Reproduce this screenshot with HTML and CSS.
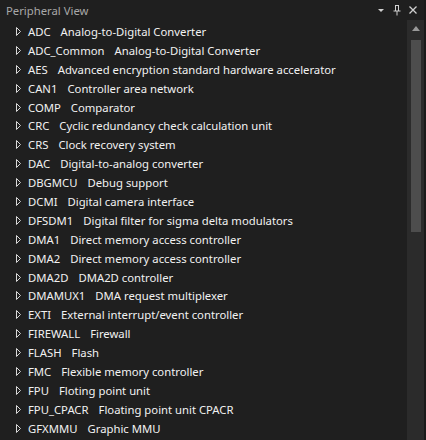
FILE: index.html
```html
<!DOCTYPE html>
<html>
<head>
<meta charset="utf-8">
<link rel="stylesheet" href="styles.css">
</head>
<body>
<div class="panel">
  <div class="titlebar">
    <span class="title">Peripheral View</span>
    <div class="tools">
      <svg class="tool" width="10" height="10" viewBox="0 0 10 10"><path d="M2 4 L8 4 L5 7 Z" fill="#d0d0d0"/></svg>
      <svg class="tool" width="10" height="12" viewBox="0 0 10 12"><path d="M3 1.5 H7 M3.5 1.5 V7 M6.5 1.5 V7 M1.5 7 H8.5 M5 7 V11.5" stroke="#d0d0d0" stroke-width="1" fill="none"/></svg>
      <svg class="tool" width="10" height="10" viewBox="0 0 10 10"><path d="M1.5 1.5 L8.5 8.5 M8.5 1.5 L1.5 8.5" stroke="#d0d0d0" stroke-width="1.3" fill="none"/></svg>
    </div>
  </div>
  <div class="body">
    <ul class="tree">
      <li><svg class="tri" width="6" height="9" viewBox="0 0 6 9"><path d="M0.5 0.5 L4.5 4.5 L0.5 8.5 Z" fill="none" stroke="#d8d8d8" stroke-width="1"/></svg><b>ADC</b><span>Analog-to-Digital Converter</span></li>
      <li><svg class="tri" width="6" height="9" viewBox="0 0 6 9"><path d="M0.5 0.5 L4.5 4.5 L0.5 8.5 Z" fill="none" stroke="#d8d8d8" stroke-width="1"/></svg><b>ADC_Common</b><span>Analog-to-Digital Converter</span></li>
      <li><svg class="tri" width="6" height="9" viewBox="0 0 6 9"><path d="M0.5 0.5 L4.5 4.5 L0.5 8.5 Z" fill="none" stroke="#d8d8d8" stroke-width="1"/></svg><b>AES</b><span>Advanced encryption standard hardware accelerator</span></li>
      <li><svg class="tri" width="6" height="9" viewBox="0 0 6 9"><path d="M0.5 0.5 L4.5 4.5 L0.5 8.5 Z" fill="none" stroke="#d8d8d8" stroke-width="1"/></svg><b>CAN1</b><span>Controller area network</span></li>
      <li><svg class="tri" width="6" height="9" viewBox="0 0 6 9"><path d="M0.5 0.5 L4.5 4.5 L0.5 8.5 Z" fill="none" stroke="#d8d8d8" stroke-width="1"/></svg><b>COMP</b><span>Comparator</span></li>
      <li><svg class="tri" width="6" height="9" viewBox="0 0 6 9"><path d="M0.5 0.5 L4.5 4.5 L0.5 8.5 Z" fill="none" stroke="#d8d8d8" stroke-width="1"/></svg><b>CRC</b><span>Cyclic redundancy check calculation unit</span></li>
      <li><svg class="tri" width="6" height="9" viewBox="0 0 6 9"><path d="M0.5 0.5 L4.5 4.5 L0.5 8.5 Z" fill="none" stroke="#d8d8d8" stroke-width="1"/></svg><b>CRS</b><span>Clock recovery system</span></li>
      <li><svg class="tri" width="6" height="9" viewBox="0 0 6 9"><path d="M0.5 0.5 L4.5 4.5 L0.5 8.5 Z" fill="none" stroke="#d8d8d8" stroke-width="1"/></svg><b>DAC</b><span>Digital-to-analog converter</span></li>
      <li><svg class="tri" width="6" height="9" viewBox="0 0 6 9"><path d="M0.5 0.5 L4.5 4.5 L0.5 8.5 Z" fill="none" stroke="#d8d8d8" stroke-width="1"/></svg><b>DBGMCU</b><span>Debug support</span></li>
      <li><svg class="tri" width="6" height="9" viewBox="0 0 6 9"><path d="M0.5 0.5 L4.5 4.5 L0.5 8.5 Z" fill="none" stroke="#d8d8d8" stroke-width="1"/></svg><b>DCMI</b><span>Digital camera interface</span></li>
      <li><svg class="tri" width="6" height="9" viewBox="0 0 6 9"><path d="M0.5 0.5 L4.5 4.5 L0.5 8.5 Z" fill="none" stroke="#d8d8d8" stroke-width="1"/></svg><b>DFSDM1</b><span>Digital filter for sigma delta modulators</span></li>
      <li><svg class="tri" width="6" height="9" viewBox="0 0 6 9"><path d="M0.5 0.5 L4.5 4.5 L0.5 8.5 Z" fill="none" stroke="#d8d8d8" stroke-width="1"/></svg><b>DMA1</b><span>Direct memory access controller</span></li>
      <li><svg class="tri" width="6" height="9" viewBox="0 0 6 9"><path d="M0.5 0.5 L4.5 4.5 L0.5 8.5 Z" fill="none" stroke="#d8d8d8" stroke-width="1"/></svg><b>DMA2</b><span>Direct memory access controller</span></li>
      <li><svg class="tri" width="6" height="9" viewBox="0 0 6 9"><path d="M0.5 0.5 L4.5 4.5 L0.5 8.5 Z" fill="none" stroke="#d8d8d8" stroke-width="1"/></svg><b>DMA2D</b><span>DMA2D controller</span></li>
      <li><svg class="tri" width="6" height="9" viewBox="0 0 6 9"><path d="M0.5 0.5 L4.5 4.5 L0.5 8.5 Z" fill="none" stroke="#d8d8d8" stroke-width="1"/></svg><b>DMAMUX1</b><span>DMA request multiplexer</span></li>
      <li><svg class="tri" width="6" height="9" viewBox="0 0 6 9"><path d="M0.5 0.5 L4.5 4.5 L0.5 8.5 Z" fill="none" stroke="#d8d8d8" stroke-width="1"/></svg><b>EXTI</b><span>External interrupt/event controller</span></li>
      <li><svg class="tri" width="6" height="9" viewBox="0 0 6 9"><path d="M0.5 0.5 L4.5 4.5 L0.5 8.5 Z" fill="none" stroke="#d8d8d8" stroke-width="1"/></svg><b>FIREWALL</b><span>Firewall</span></li>
      <li><svg class="tri" width="6" height="9" viewBox="0 0 6 9"><path d="M0.5 0.5 L4.5 4.5 L0.5 8.5 Z" fill="none" stroke="#d8d8d8" stroke-width="1"/></svg><b>FLASH</b><span>Flash</span></li>
      <li><svg class="tri" width="6" height="9" viewBox="0 0 6 9"><path d="M0.5 0.5 L4.5 4.5 L0.5 8.5 Z" fill="none" stroke="#d8d8d8" stroke-width="1"/></svg><b>FMC</b><span>Flexible memory controller</span></li>
      <li><svg class="tri" width="6" height="9" viewBox="0 0 6 9"><path d="M0.5 0.5 L4.5 4.5 L0.5 8.5 Z" fill="none" stroke="#d8d8d8" stroke-width="1"/></svg><b>FPU</b><span>Floting point unit</span></li>
      <li><svg class="tri" width="6" height="9" viewBox="0 0 6 9"><path d="M0.5 0.5 L4.5 4.5 L0.5 8.5 Z" fill="none" stroke="#d8d8d8" stroke-width="1"/></svg><b>FPU_CPACR</b><span>Floating point unit CPACR</span></li>
      <li><svg class="tri" width="6" height="9" viewBox="0 0 6 9"><path d="M0.5 0.5 L4.5 4.5 L0.5 8.5 Z" fill="none" stroke="#d8d8d8" stroke-width="1"/></svg><b>GFXMMU</b><span>Graphic MMU</span></li>
    </ul>
    <div class="scrollbar">
      <div class="arrow"></div>
      <div class="thumb"></div>
    </div>
  </div>
</div>
</body>
</html>
```
FILE: styles.css
```css
html, body {
  margin: 0;
  padding: 0;
  background: #1f1f1f;
}
.panel {
  width: 426px;
  height: 440px;
  background: #1f1f1f;
  font-family: "Noto Sans", "Open Sans", sans-serif;
  color: #f1f1f1;
  display: flex;
  flex-direction: column;
  overflow: hidden;
  box-sizing: border-box;
  border-right: 2px solid #1a1a1a;
}
.titlebar {
  height: 20px;
  display: flex;
  align-items: center;
  justify-content: space-between;
  padding: 0 6px 0 6px;
  flex: none;
}
.title {
  font-size: 11.3px;
  color: #a8a8a8;
}
.tools {
  display: flex;
  align-items: center;
  gap: 6px;
}
.tool { display: block; }
.body {
  flex: 1;
  display: flex;
  min-height: 0;
}
.tree {
  list-style: none;
  margin: 0;
  padding: 2px 0 0 16px;
  flex: 1;
  overflow: hidden;
}
.tree li {
  height: 18.9px;
  font-size: 11.3px;
  white-space: nowrap;
  display: flex;
  align-items: center;
}
.tri {
  display: block;
  flex: none;
  margin-right: 6px;
}
.tree b {
  font-weight: normal;
}
.tree span {
  margin-left: 10px;
}
.scrollbar {
  width: 17px;
  background: #2b2b2b;
  display: flex;
  flex-direction: column;
  align-items: center;
  flex: none;
}
.arrow {
  margin-top: 6px;
  width: 0;
  height: 0;
  border-left: 4px solid transparent;
  border-right: 4px solid transparent;
  border-bottom: 5px solid #999;
}
.thumb {
  margin-top: 9px;
  width: 10px;
  height: 192px;
  background: #4d4d4d;
}
```
